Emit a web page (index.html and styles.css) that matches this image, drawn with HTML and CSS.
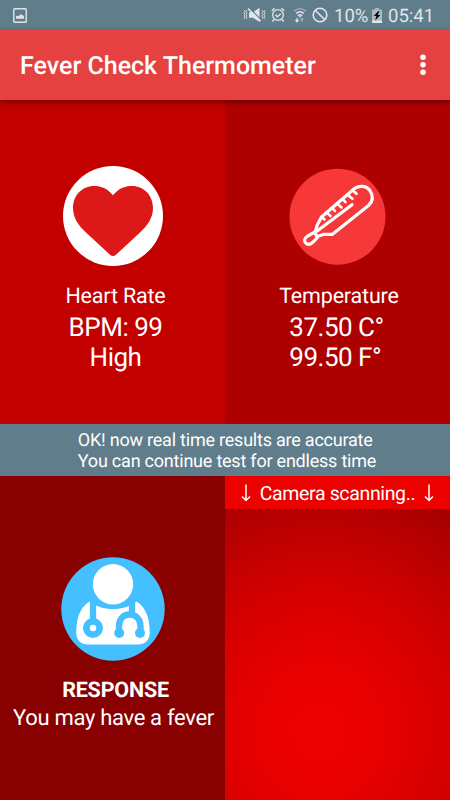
FILE: index.html
```html
<!DOCTYPE html>
<html lang="en">
<head>
    <meta charset="UTF-8">
    <meta name="viewport" content="width=device-width, initial-scale=1.0">
    <title>Fever Check Thermometer</title>
    <link rel="stylesheet" href="styles.css">
</head>
<body>
    <div class="screen">
        <!-- Status bar -->
        <div class="status-bar">
            <svg class="icon-picture" width="14" height="15" viewBox="0 0 14 15">
                <rect x="0.8" y="0.8" width="12.4" height="13.4" rx="0.8" fill="none" stroke="currentColor" stroke-width="1.4"/>
                <path d="M3 10.7V8.5l1.5-1 1 .8L7 7l1-1.2L9 7.5l1-.5 1 1.5v2.2z" fill="currentColor"/>
            </svg>
            <div class="status-right">
                <svg class="icon-mute" width="23" height="16" viewBox="0 0 23 16">
                    <path d="M6 5.2h4L16.5 0.8v14L10 10.8H6z" fill="currentColor"/>
                    <path d="M6.2 0.6L18.5 13.4" stroke="#607d8b" stroke-width="1.2"/>
                    <path d="M5 1.5L17.5 14.2" stroke="currentColor" stroke-width="1.6"/>
                    <path d="M1 3l1 1.5L1 6l1 1.5L1 9l1 1.5L1 12M4 3L3 4.5 4 6 3 7.5 4 9 3 10.5 4 12M19 3l1 1.5L19 6l1 1.5L19 9l1 1.5L19 12M22 3l-1 1.5L22 6l-1 1.5L22 9l-1 1.5L22 12" fill="none" stroke="currentColor" stroke-width="0.9"/>
                </svg>
                <svg class="icon-alarm" width="14" height="16" viewBox="0 0 14 16">
                    <circle cx="7" cy="8" r="5.4" fill="none" stroke="currentColor" stroke-width="1.3"/>
                    <path d="M4.4 7.7l2 2 3.3-3M0.8 3.8l2.8-2.5M13.2 3.8l-2.8-2.5M2.9 12.5l-1.4 2M11.1 12.5l1.4 2" fill="none" stroke="currentColor" stroke-width="1.4"/>
                </svg>
                <svg class="icon-wifi" width="14" height="16" viewBox="0 0 14 16">
                    <path d="M1 4.2Q7-1 13 4.2" fill="none" stroke="currentColor" stroke-width="1.3" opacity="0.55"/>
                    <path d="M3 6.6Q7 3 11 6.6M4.8 8.8Q7 6.8 9.2 8.8" fill="none" stroke="currentColor" stroke-width="1.4"/>
                    <path d="M5.6 9.2h2.8L7 11z" fill="currentColor"/>
                    <path d="M4 11v3.6M2.5 13L4 14.8 5.5 13" fill="none" stroke="currentColor" stroke-width="1.3"/>
                    <path d="M9 15v-3.6M7.6 13L9 11.2l1.4 1.8" fill="none" stroke="currentColor" stroke-width="1.2" opacity="0.45"/>
                </svg>
                <svg class="icon-block" width="16" height="16" viewBox="0 0 16 16">
                    <circle cx="8" cy="8" r="6.8" fill="none" stroke="currentColor" stroke-width="1.6"/>
                    <path d="M3.2 3.2l9.6 9.6" stroke="currentColor" stroke-width="1.6"/>
                </svg>
                <span class="battery-level">10%</span>
                <svg class="icon-battery" width="10" height="15" viewBox="0 0 10 15">
                    <path d="M0 1.5h3V0h4v1.5h3V15H0z" fill="#a9b9c1"/>
                    <path d="M0 12.5h10V15H0z" fill="currentColor"/>
                    <path d="M6.5 3L1.8 8h2.5L3.2 12.5 8.3 7H5.7l1.8-4z" fill="#000"/>
                </svg>
                <span class="clock">05:41</span>
            </div>
        </div>

        <!-- App bar -->
        <header class="app-bar">
            <h1 class="app-title">Fever Check Thermometer</h1>
            <svg class="menu-dots" width="6" height="22" viewBox="0 0 6 22">
                <circle cx="3" cy="3.3" r="2.75" fill="#fff"/>
                <circle cx="3" cy="10.8" r="2.75" fill="#fff"/>
                <circle cx="3" cy="18.3" r="2.75" fill="#fff"/>
            </svg>
        </header>

        <!-- Results -->
        <div class="row">
            <section class="panel heart-panel">
                <svg width="102" height="102" viewBox="0 0 102 102">
                    <circle cx="51" cy="51" r="50" fill="#fff"/>
                    <path d="M51 30.2C45.5 23.5 39 21 32 21C20 21 11 30.5 11 43C11 53 16.5 60.5 24 67.5L48 89.8Q51 92.2 54 89.8L78 67.5C85.5 60.5 91 53 91 43C91 30.5 82 21 70 21C63 21 56.5 23.5 51 30.2Z" fill="#dd1818"/>
                </svg>
                <h2 class="panel-label">Heart Rate</h2>
                <p class="panel-value">BPM: 99<br>High</p>
            </section>
            <section class="panel temp-panel">
                <svg width="102" height="102" viewBox="0 0 102 102">
                    <circle cx="50.5" cy="51.7" r="48" fill="#f73838"/>
                    <g fill="none" stroke="#fff" stroke-width="3.2" stroke-linecap="round" stroke-linejoin="round">
                        <path d="M28.5 66L30.3 60L34.5 52L67.5 23.5C72.5 20 79.5 20.7 83 25.5C86.5 31 85.8 36.5 81.5 40.5L45.5 69.3L37 69.3L30 71.5"/>
                        <path d="M27.5 67.2L20 71.5C17 73.5 17 76.5 18.8 78.2C20.7 80 23.5 79.3 25.8 77.3L30.5 72.5ZM28.5 67.3L65 39.8"/>
                    </g>
                    <path d="M34.5 52L37.5 54.5M39.5 47.5L43.5 51M45 43L48 46M50 38.5L54.5 42.5M55.5 34L58.5 37.2M60.5 29.7L65.5 33.7M66 25.5L69.5 28.8" fill="none" stroke="#fff" stroke-width="2.6" stroke-linecap="round"/>
                </svg>
                <h2 class="panel-label">Temperature</h2>
                <p class="panel-value">37.50 C°<br>99.50 F°</p>
            </section>
        </div>

        <div class="notice">
            <p class="notice-text">OK! now real time results are accurate<br>You can continue test for endless time</p>
        </div>

        <div class="row">
            <section class="panel response-panel">
                <svg width="104" height="104" viewBox="0 0 104 104">
                    <circle cx="52" cy="52" r="51.7" fill="#44bfff"/>
                    <circle cx="52" cy="27.3" r="20.2" fill="#fff"/>
                    <path d="M28.5 44.5C18 51 15.3 63 15.3 76C15.3 83 20 87.5 27 87.5H77C84 87.5 88.7 83 88.7 76C88.7 63 86 51 75.5 44.5C63 54.5 41 54.5 28.5 44.5Z" fill="#fff"/>
                    <g fill="none" stroke="#44bfff" stroke-width="6.3" stroke-linejoin="round">
                        <path d="M32 43V64M71 43V60"/>
                        <path d="M58 77V69C58 62 62.5 57.5 68.5 57.5C74.5 57.5 79.5 62 79.5 69V77"/>
                    </g>
                    <circle cx="32" cy="71" r="6.6" fill="#fff" stroke="#44bfff" stroke-width="6.8"/>
                    <circle cx="58.2" cy="76" r="5" fill="#44bfff"/>
                    <circle cx="79" cy="76" r="5" fill="#44bfff"/>
                </svg>
                <h2 class="response-title">RESPONSE</h2>
                <p class="response-text">You may have a fever</p>
            </section>
            <section class="camera">
                <div class="camera-header">
                    <svg width="10" height="18" viewBox="0 0 10 18">
                        <path d="M5 0.5V16M1 12.5L5 16.5L9 12.5" fill="none" stroke="#fff" stroke-width="1.5"/>
                    </svg>
                    <span class="camera-text">Camera scanning..</span>
                    <svg width="10" height="18" viewBox="0 0 10 18">
                        <path d="M5 0.5V16M1 12.5L5 16.5L9 12.5" fill="none" stroke="#fff" stroke-width="1.5"/>
                    </svg>
                </div>
                <div class="camera-preview"></div>
            </section>
        </div>
    </div>
</body>
</html>
```
FILE: styles.css
```css
* {
    box-sizing: border-box;
}

body {
    margin: 0;
    font-family: Roboto, "Liberation Sans", sans-serif;
    color: #fff;
    text-rendering: geometricPrecision;
}

h1,
h2,
p {
    margin: 0;
    font-weight: 400;
    white-space: nowrap;
}

svg {
    display: block;
    flex: none;
}

.screen {
    display: flex;
    flex-direction: column;
    width: 450px;
    height: 800px;
    overflow: hidden;
}

/* Status bar */
.status-bar {
    display: flex;
    justify-content: space-between;
    align-items: center;
    height: 30px;
    padding: 0 15px 0 13px;
    background: #607d8b;
    color: #dfe5e8;
}

.status-right {
    display: flex;
    align-items: center;
}

.icon-alarm {
    margin-left: 5px;
}

.icon-wifi {
    margin-left: 8px;
}

.icon-block {
    margin-left: 5px;
}

.battery-level,
.clock {
    font-size: 18.5px;
    line-height: 30px;
    padding-top: 2px;
}

.battery-level {
    width: 34px;
    margin-left: 6px;
}

.icon-battery {
    margin-left: 4px;
}

.clock {
    width: 47px;
    margin-left: 6px;
}

/* App bar */
.app-bar {
    position: relative;
    z-index: 1;
    display: flex;
    justify-content: space-between;
    align-items: center;
    height: 70px;
    padding: 4px 24px 0 20px;
    background: #e54140;
    box-shadow: 0 2px 6px rgba(0, 0, 0, 0.4);
}

.app-title {
    font-size: 25px;
    font-weight: 500;
    line-height: 30px;
}

/* the dots sit slightly above the title's middle */
.menu-dots {
    margin-bottom: 4px;
}

/* Panels */
.row {
    display: flex;
    height: 324px;
}

.panel {
    display: flex;
    flex-direction: column;
    align-items: center;
    width: 225px;
}

.heart-panel {
    padding-top: 65px;
    background: #c20000;
}

.temp-panel {
    padding-top: 65px;
    background: #ad0000;
}

.panel-label {
    margin-top: 16px;
    font-size: 21.5px;
    line-height: 27px;
    letter-spacing: -0.18px;
}

.panel-value {
    margin-top: 4px;
    font-size: 26px;
    line-height: 29.5px;
    letter-spacing: -0.5px;
    text-align: center;
}

.heart-panel .panel-label,
.heart-panel .panel-value {
    padding-left: 6px;
}

.temp-panel .panel-label {
    padding-left: 3px;
}

.temp-panel .panel-value {
    padding-right: 2px;
    text-align: left;
}

/* Notice */
.notice {
    display: flex;
    justify-content: center;
    height: 52px;
    padding: 6px 0 0 4px;
    background: #607d8b;
}

.notice-text {
    font-size: 18px;
    line-height: 21px;
    letter-spacing: -0.22px;
}

/* Response */
.response-panel {
    padding-top: 81px;
    background: #880000;
}

.response-title {
    margin-top: 16px;
    padding-left: 6px;
    font-size: 21.5px;
    font-weight: 700;
    line-height: 27px;
    letter-spacing: -0.2px;
}

.response-text {
    margin-top: 1px;
    padding-left: 2px;
    font-size: 22px;
    line-height: 28px;
    letter-spacing: -0.32px;
}

/* Camera */
.camera {
    display: flex;
    flex-direction: column;
    width: 225px;
}

.camera-header {
    display: flex;
    justify-content: center;
    align-items: center;
    gap: 9px;
    height: 33px;
    background: #ec0000;
}

.camera-text {
    padding-top: 1px;
    font-size: 19.5px;
    letter-spacing: -0.35px;
}

.camera-preview {
    flex: 1;
    border-top: 1px solid #990000;
    background: radial-gradient(ellipse 260px 280px at 42% 76%, #ee0000 0%, #ea0000 20%, #d60000 50%, #b40000 80%, #980000 100%);
}
```
